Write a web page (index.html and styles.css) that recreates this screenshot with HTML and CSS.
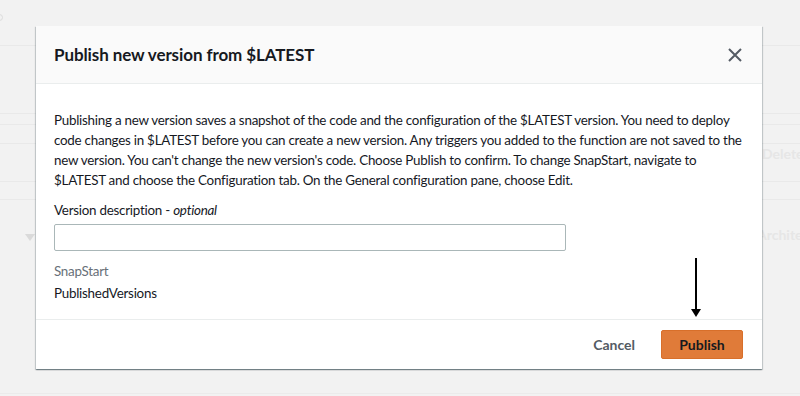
FILE: index.html
```html
<!DOCTYPE html>
<html lang="en">
<head>
    <meta charset="UTF-8">
    <meta name="viewport" content="width=device-width, initial-scale=1.0">
    <title>Publish new version</title>
    <link rel="stylesheet" href="styles.css">
</head>
<body>

    <!-- faded console page behind the dialog -->
    <div class="page">
        <div class="page-row row-top"><span class="dot"></span></div>
        <div class="page-row row-tall"></div>
        <div class="page-row row-thin"></div>
        <div class="page-row row-mid"></div>
        <div class="page-row row-actions"><span class="ghost ghost-delete">Delete</span></div>
        <div class="page-row row-thin2"></div>
        <div class="page-row row-section">
            <span class="caret"></span>
            <span class="ghost ghost-arch">Architec</span>
        </div>
    </div>

    <div class="modal">
        <div class="modal-header">
            <h2>Publish new version from $LATEST</h2>
            <button class="close" aria-label="Close">
                <svg width="14" height="14" viewBox="0 0 14 14">
                    <path d="M1 1 L13 13 M13 1 L1 13" stroke="#545b64" stroke-width="2" fill="none"/>
                </svg>
            </button>
        </div>

        <div class="modal-body">
            <p class="intro">Publishing a new version saves a snapshot of the code and the configuration of the $LATEST version. You need to deploy code changes in $LATEST before you can create a new version. Any triggers you added to the function are not saved to the new version. You can't change the new version's code. Choose Publish to confirm. To change SnapStart, navigate to $LATEST and choose the Configuration tab. On the General configuration pane, choose Edit.</p>

            <label for="versionDesc">Version description - <em>optional</em></label>
            <input type="text" id="versionDesc">

            <div class="field-key">SnapStart</div>
            <div class="field-value">PublishedVersions</div>
        </div>

        <div class="modal-footer">
            <button class="btn-link">Cancel</button>
            <button class="btn-primary">Publish</button>
        </div>

        <div class="arrow"></div>
    </div>

</body>
</html>
```

FILE: styles.css
```css
body {
    margin: 0;
    height: 396px;
    overflow: hidden;
    position: relative;
    background-color: #f2f2f2;
    font-family: 'Lato', 'Liberation Sans', sans-serif;
    font-size: 13.4px;
    letter-spacing: -0.25px;
    color: #16191f;
}

/* background page */
.page {
    height: 393px;
    border-bottom: 1px solid #ebebeb;
}

.page-row {
    border-bottom: 1px solid #e9e9e9;
    position: relative;
}

.row-top { height: 45px; }
.row-tall { height: 67px; }
.row-thin { height: 10px; }
.row-mid { height: 18px; }
.row-actions { height: 37px; }
.row-thin2 { height: 17px; }
.row-section { height: 70px; border-bottom: none; }

.dot {
    position: absolute;
    left: -4px;
    top: 14px;
    width: 5px;
    height: 5px;
    border: 1px solid #dcdcdc;
    border-radius: 50%;
}

.caret {
    position: absolute;
    left: 25px;
    top: 34px;
    border-left: 5px solid transparent;
    border-right: 5px solid transparent;
    border-top: 7px solid #dadada;
}

.ghost {
    position: absolute;
    font-weight: bold;
    color: #e6e6e6;
    font-size: 14px;
    letter-spacing: 0;
}

.ghost-delete { left: 762px; top: 1px; }
.ghost-arch { left: 757px; top: 26px; }

/* dialog */
.modal {
    position: absolute;
    left: 36px;
    top: 26px;
    width: 726px;
    background-color: #fff;
    box-shadow: 0 1px 1px 0 rgba(0, 28, 36, 0.35), 1px 1px 1px 0 rgba(0, 28, 36, 0.15), -1px 1px 1px 0 rgba(0, 28, 36, 0.15);
}

.modal-header {
    height: 57px;
    display: flex;
    align-items: center;
    justify-content: space-between;
    padding: 0 18px;
    background-color: #fafafa;
    border-bottom: 1px solid #eaeded;
}

.modal-header h2 {
    margin: 0;
    font-size: 17px;
    font-weight: bold;
    letter-spacing: -0.1px;
}

.close {
    border: none;
    background: none;
    padding: 0;
    margin-right: 2px;
    display: flex;
    cursor: pointer;
}

.modal-body {
    padding: 26px 18px 16px;
}

.intro {
    margin: 0 0 10px;
    line-height: 20px;
}

label {
    display: block;
    line-height: 20px;
    margin-bottom: 4px;
}

label em {
    font-style: italic;
}

input {
    display: block;
    width: 512px;
    height: 27px;
    box-sizing: border-box;
    border: 1px solid #aab7b8;
    border-radius: 2px;
    margin-bottom: 10px;
    font-family: inherit;
    font-size: 14px;
}

.field-key {
    color: #687078;
    line-height: 20px;
    margin-bottom: 2px;
}

.field-value {
    line-height: 20px;
}

.modal-footer {
    height: 49px;
    display: flex;
    align-items: center;
    justify-content: flex-end;
    gap: 7px;
    padding: 0 19px;
    border-top: 1px solid #eaeded;
}

.btn-link {
    border: none;
    background: none;
    font-family: inherit;
    font-size: 14px;
    font-weight: bold;
    letter-spacing: 0;
    color: #545b64;
    padding: 4px 19px;
    cursor: pointer;
}

.btn-primary {
    width: 82px;
    height: 29px;
    border: 1px solid #d86f2a;
    border-radius: 2px;
    background-color: #e07b39;
    font-family: inherit;
    font-size: 14px;
    font-weight: bold;
    letter-spacing: 0;
    color: #16191f;
    cursor: pointer;
}

/* annotation arrow */
.arrow {
    position: absolute;
    left: 659px;
    top: 232px;
    width: 2px;
    height: 51px;
    background-color: #000;
}

.arrow::after {
    content: "";
    position: absolute;
    left: -4px;
    top: 51px;
    border-left: 5px solid transparent;
    border-right: 5px solid transparent;
    border-top: 8px solid #000;
}
```
